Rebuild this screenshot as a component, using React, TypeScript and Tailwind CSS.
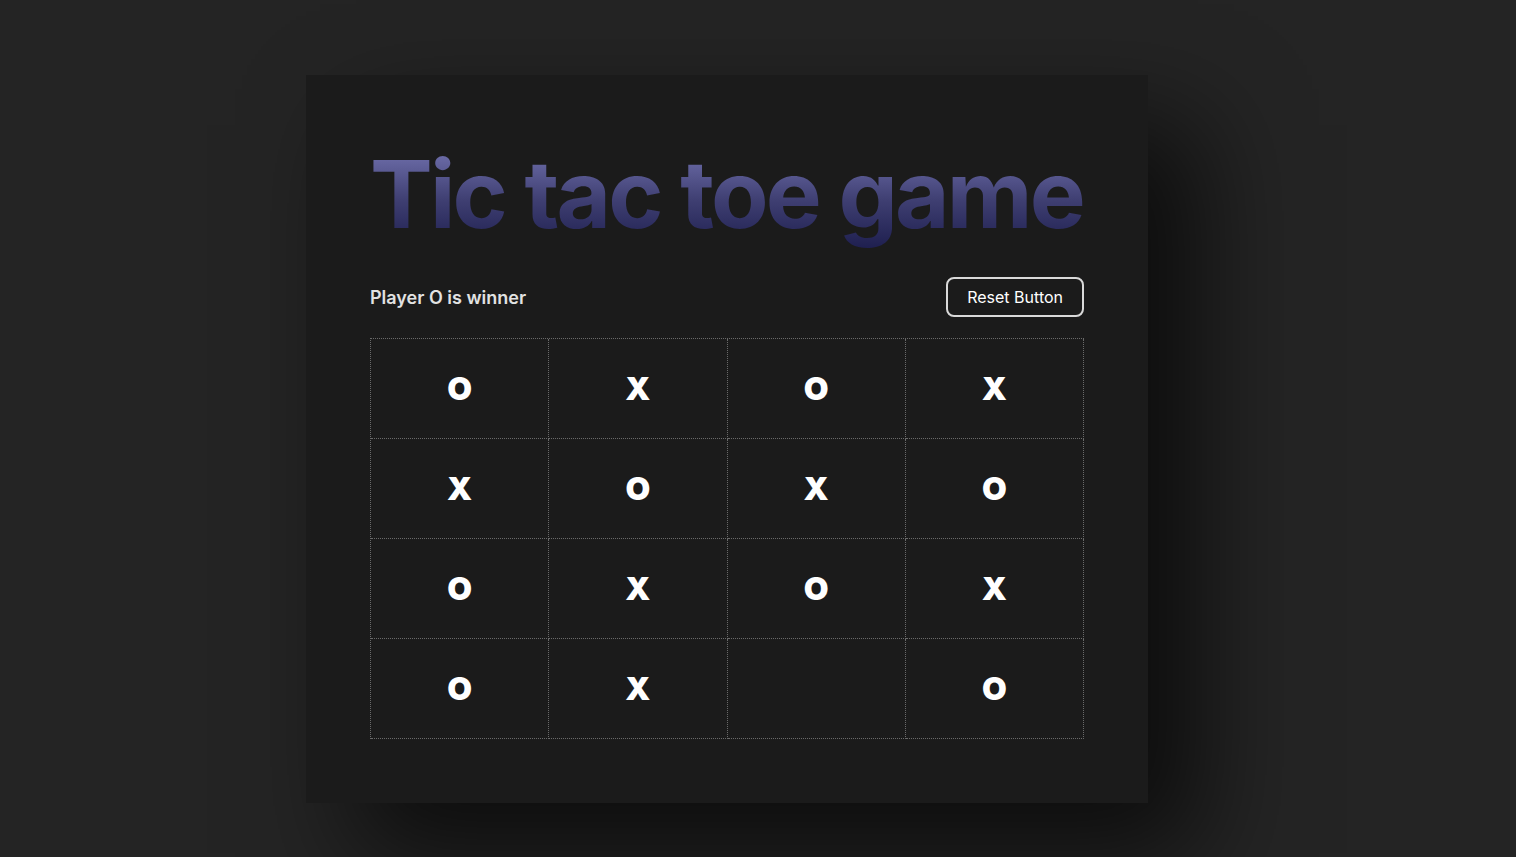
import React, { useState } from "react";

type Mark = "X" | "O" | null;

const initialBoard: Mark[] = [
  "O", "X", "O", "X",
  "X", "O", "X", "O",
  "O", "X", "O", "X",
  "O", "X", null, "O",
];

const App = () => {
  const [board, setBoard] = useState<Mark[]>(initialBoard);
  const [status, setStatus] = useState("Player O is winner");

  const reset = () => {
    setBoard(Array(16).fill(null));
    setStatus("Player X turn");
  };

  return (
    <main
      className="min-h-screen bg-[#242424] pl-[306px] pt-[75px]"
      style={{ fontFamily: "Inter, 'Noto Sans', sans-serif" }}
    >
      <div className="w-[842px] h-[728px] bg-[#1b1b1b] px-16 pt-[72px] shadow-[50px_50px_100px_rgba(0,0,0,0.65)]">
        <h1 className="whitespace-nowrap text-[94px] leading-none font-bold tracking-[-0.03em] pb-3 bg-gradient-to-b from-[#7373b0] via-[#3f3f72] to-[#1c1c4c] bg-clip-text text-transparent">
          Tic tac toe game
        </h1>

        <div className="flex items-center justify-between mt-6">
          <p className="text-lg font-semibold text-[#e2e2e2] pt-px">{status}</p>
          <button
            onClick={reset}
            className="h-10 px-[19px] rounded-lg border-2 border-[#d9d9d9] text-white text-base"
          >
            Reset Button
          </button>
        </div>

        <div className="grid grid-cols-4 mt-[21px] border-l border-t border-dotted border-[#6a6a6a]">
          {board.map((cell, i) => (
            <div
              key={i}
              className="h-[100px] flex items-center justify-center border-r border-b border-dotted border-[#6a6a6a] text-[32px] font-black text-white"
            >
              {cell}
            </div>
          ))}
        </div>
      </div>
    </main>
  );
};

export default App;
